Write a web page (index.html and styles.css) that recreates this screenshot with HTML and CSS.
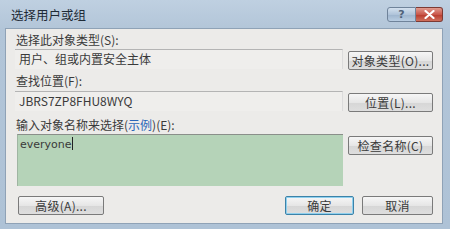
FILE: index.html
```html
<!DOCTYPE html>
<html lang="zh">
<head>
<meta charset="utf-8">
<title>选择用户或组</title>
<link rel="stylesheet" href="styles.css">
</head>
<body>
<div class="window">
  <div class="titlebar">
    <span class="title">选择用户或组</span>
    <div class="caption-btns">
      <span class="cbtn help">?</span>
      <span class="cbtn close">
        <svg width="11" height="9" viewBox="0 0 11 9"><path d="M1.5 1 L9.5 8 M9.5 1 L1.5 8" stroke="#fff" stroke-width="2.2" stroke-linecap="round"/></svg>
      </span>
    </div>
  </div>
  <div class="content">
    <div class="label l1">选择此对象类型(S):</div>
    <div class="row r1">
      <div class="field">用户、组或内置安全主体</div>
      <button class="btn">对象类型(O)...</button>
    </div>
    <div class="label l2">查找位置(F):</div>
    <div class="row r2">
      <div class="field">JBRS7ZP8FHU8WYQ</div>
      <button class="btn">位置(L)...</button>
    </div>
    <div class="label l3">输入对象名称来选择(<span class="link">示例</span>)(E):</div>
    <div class="row r3">
      <div class="names">everyone<span class="caret"></span></div>
      <button class="btn">检查名称(C)</button>
    </div>
    <div class="bottom">
      <button class="btn adv">高级(A)...</button>
      <div class="spacer"></div>
      <button class="btn ok">确定</button>
      <button class="btn cancel">取消</button>
    </div>
  </div>
</div>
</body>
</html>
```
FILE: styles.css
```css
html, body {
  margin: 0;
  padding: 0;
  width: 450px;
  height: 229px;
  overflow: hidden;
  background: #b3c6d9;
}
body {
  font-family: "Noto Sans CJK SC", "DejaVu Sans", sans-serif;
  font-size: 12px;
  color: #3a3a3a;
}
.window {
  width: 450px;
  height: 229px;
  box-sizing: border-box;
  background: linear-gradient(#bfd0e1, #b2c5d8 30px, #aec2d6);
  padding: 0 7px 5px 5px;
  display: flex;
  flex-direction: column;
}
.titlebar {
  height: 28px;
  display: flex;
  align-items: flex-start;
  flex-shrink: 0;
}
.title {
  margin-left: 6px;
  margin-top: 6px;
  font-size: 12.5px;
  color: #1e2a36;
  line-height: 18px;
}
.caption-btns {
  margin-left: auto;
  margin-top: 7px;
  margin-right: 0;
  display: flex;
}
.cbtn {
  height: 15px;
  box-sizing: border-box;
  border: 1px solid #6f839a;
  display: flex;
  align-items: center;
  justify-content: center;
}
.help {
  width: 29px;
  border-radius: 3px 0 0 3px;
  background: linear-gradient(#d3e0ee, #b0c4da 50%, #9db4cd 51%, #b9cde2);
  color: #50627a;
  font-family: "DejaVu Sans", sans-serif;
  font-size: 11px;
  font-weight: bold;
}
.close {
  width: 27px;
  border-left: none;
  border-color: #7c3a33;
  border-radius: 0 3px 3px 0;
  background: linear-gradient(#e19b8f, #c9574a 50%, #b83a2c 51%, #d0705c);
}
.content {
  flex: 1;
  background: #ecebe9;
  border: 1px solid #8fa2b6;
  padding: 4px 9px 0 9px;
  display: flex;
  flex-direction: column;
}
.label {
  height: 14px;
  line-height: 14px;
  padding-left: 1px;
}
.l1 { margin-top: 0; }
.l2 { margin-top: 4px; }
.l3 { margin-top: 6px; }
.link { color: #2a66b8; }
.row {
  display: grid;
  grid-template-columns: 1fr 85px;
  column-gap: 5px;
  align-items: start;
}
.r1 { margin-top: 2px; }
.r2 { margin-top: 3px; }
.r3 { margin-top: 2px; }
.field {
  height: 20px;
  box-sizing: border-box;
  border-top: 1px solid #b4b4b4;
  border-right: 1px solid #dcdcdc;
  background: #efeeec;
  padding-left: 4px;
  line-height: 18px;
}
.r1 .btn, .r2 .btn { margin-top: 2px; }
.names {
  height: 52px;
  margin-left: 2px;
  box-sizing: border-box;
  background: #b5d3b8;
  border-top: 1px solid #8a8f8a;
  border-left: 1px solid #9fb5a2;
  padding: 2px 2px;
  font-family: "DejaVu Sans", sans-serif;
  font-size: 11px;
  line-height: 14px;
}
.caret {
  display: inline-block;
  width: 1px;
  height: 13px;
  background: #222;
  vertical-align: -2px;
}
.r3 .btn { margin-top: 2px; }
.btn {
  height: 19px;
  box-sizing: border-box;
  border: 1px solid #7a7a7a;
  border-radius: 2px;
  background: linear-gradient(#f6f6f6, #e6e6e6 50%, #d6d6d6 51%, #dedede);
  font-family: "Noto Sans CJK SC", sans-serif;
  font-size: 12px;
  color: #3a3a3a;
  padding: 0;
  line-height: 16px;
  letter-spacing: 0.3px;
}
.bottom {
  display: flex;
  align-items: center;
  margin-top: 10px;
}
.adv {
  width: 86px;
  margin-left: 3px;
}
.spacer { flex: 1; }
.ok {
  width: 69px;
  border-color: #3c82a8;
  box-shadow: inset 0 0 0 1px #8fd0ee;
  margin-right: 8px;
}
.cancel { width: 71px; }
```
